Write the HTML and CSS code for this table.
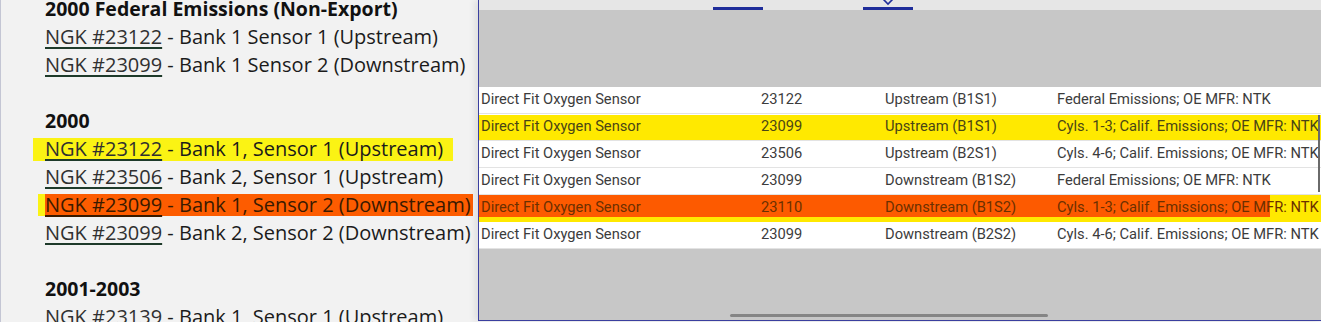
FILE: index.html
```html
<!DOCTYPE html>
<html>
<head>
<meta charset="utf-8">
<link rel="stylesheet" href="styles.css">
</head>
<body>
<div class="left">
  <div class="content">
    <div class="group">
      <div class="line head">2000 Federal Emissions (Non-Export)</div>
      <div class="line"><a href="#">NGK #23122</a> - Bank 1 Sensor 1 (Upstream)</div>
      <div class="line"><a href="#">NGK #23099</a> - Bank 1 Sensor 2 (Downstream)</div>
    </div>
    <div class="group">
      <div class="line head">2000</div>
      <div class="line"><span class="hl-yellow"><a href="#">NGK #23122</a> - Bank 1, Sensor 1 (Upstream)</span></div>
      <div class="line"><a href="#">NGK #23506</a> - Bank 2, Sensor 1 (Upstream)</div>
      <div class="line"><span class="hl-orange"><a href="#">NGK #23099</a> - Bank 1, Sensor 2 (Downstream)</span></div>
      <div class="line"><a href="#">NGK #23099</a> - Bank 2, Sensor 2 (Downstream)</div>
    </div>
    <div class="group">
      <div class="line head">2001-2003</div>
      <div class="line"><a href="#">NGK #23139</a> - Bank 1, Sensor 1 (Upstream)</div>
    </div>
  </div>
</div>
<div class="right">
  <div class="tabs">
    <div class="tab"></div>
    <div class="tab active">
      <svg class="chev" width="12" height="7" viewBox="0 0 12 7"><path d="M1.5 0.5 L6 5 L10.5 0.5" fill="none" stroke="#1f2d9a" stroke-width="1.6"/></svg>
    </div>
  </div>
  <div class="grey-top"></div>
  <div class="table">
    <div class="row"><span>Direct Fit Oxygen Sensor</span><span>23122</span><span>Upstream (B1S1)</span><span>Federal Emissions; OE MFR: NTK</span></div>
    <div class="row yellow"><span>Direct Fit Oxygen Sensor</span><span>23099</span><span>Upstream (B1S1)</span><span>Cyls. 1-3; Calif. Emissions; OE MFR: NTK</span></div>
    <div class="row"><span>Direct Fit Oxygen Sensor</span><span>23506</span><span>Upstream (B2S1)</span><span>Cyls. 4-6; Calif. Emissions; OE MFR: NTK</span></div>
    <div class="row"><span>Direct Fit Oxygen Sensor</span><span>23099</span><span>Downstream (B1S2)</span><span>Federal Emissions; OE MFR: NTK</span></div>
    <div class="row orange"><span>Direct Fit Oxygen Sensor</span><span>23110</span><span>Downstream (B1S2)</span><span>Cyls. 1-3; Calif. Emissions; OE MFR: NTK</span></div>
    <div class="row"><span>Direct Fit Oxygen Sensor</span><span>23099</span><span>Downstream (B2S2)</span><span>Cyls. 4-6; Calif. Emissions; OE MFR: NTK</span></div>
    <div class="vscroll"></div>
  </div>
  <div class="grey-bottom">
    <div class="hthumb"></div>
  </div>
</div>
</body>
</html>
```

FILE: styles.css
```css
html, body {
  margin: 0;
  padding: 0;
}
body {
  width: 1321px;
  height: 322px;
  display: flex;
  overflow: hidden;
  background: #f2f2f2;
}
.left {
  width: 477px;
  flex: none;
  border-left: 1px solid #c4c6d4;
  background: #f2f2f2;
  overflow: hidden;
  font-family: "Open Sans", "Liberation Sans", sans-serif;
  font-size: 20px;
  line-height: 28px;
  color: #1b1b1b;
  white-space: nowrap;
}
.content {
  margin-top: -5px;
  padding-left: 44px;
}
.group + .group {
  margin-top: 28px;
}
.head {
  font-weight: 700;
  font-size: 19.5px;
  color: #111;
}
.line a {
  color: #303030;
  text-decoration: underline;
  text-decoration-color: #1e3a2a;
  text-decoration-thickness: 2px;
  text-underline-offset: 3px;
}
.hl-yellow {
  display: inline-block;
  margin-left: -12px;
  padding: 0 10px 0 12px;
  background: linear-gradient(#fbf314, #fbf314) 0 3px / 100% 23px no-repeat;
}
.hl-orange {
  display: inline-block;
  margin-left: -7px;
  padding: 0 2px 0 7px;
  background:
    linear-gradient(#fd5c00, #fd5c00) 7px 3px / calc(100% - 7px) 22px no-repeat,
    linear-gradient(#fbf314, #fbf314) 0 3px / 7px 22px no-repeat;
}
.hl-orange, .hl-orange a {
  color: #3a1a00;
}
.hl-orange a {
  text-decoration-color: #3a1a00;
}
.right {
  flex: 1;
  height: 320px;
  border-left: 1px solid #3a3f9f;
  border-bottom: 1px solid #3a3f9f;
  display: flex;
  flex-direction: column;
  box-shadow: -4px 0 6px rgba(0, 0, 0, 0.07);
  font-family: Roboto, "Liberation Sans", sans-serif;
  font-size: 14.7px;
  color: #3c3c3c;
}
.tabs {
  height: 10px;
  flex: none;
  background: #e6e6e6;
  display: flex;
  align-items: flex-end;
  gap: 100px;
  padding-left: 234px;
}
.tab {
  width: 50px;
  height: 3px;
  background: #1f2d9a;
  position: relative;
}
.chev {
  position: absolute;
  left: 19px;
  top: -8px;
}
.grey-top {
  height: 77px;
  flex: none;
  background: #c7c7c7;
}
.table {
  flex: none;
  background: #fff;
  position: relative;
}
.row {
  height: 24px;
  padding-bottom: 2px;
  border-bottom: 1px solid #e3e3e3;
  display: grid;
  grid-template-columns: 280px 124px 172px 1fr;
  align-items: center;
  padding-left: 2px;
  white-space: nowrap;
  overflow: hidden;
}
.row.yellow {
  background: linear-gradient(#ffe900, #ffe900) 0 1px / 100% 25px no-repeat, #fff;
  color: #4a4516;
}
.row.orange {
  background: linear-gradient(#fd5a00, #fd5a00) 0 0 / 791px 22px no-repeat, #ffe900;
  color: #6b3000;
  border-bottom-color: #ffe900;
}
.vscroll {
  position: absolute;
  right: 1px;
  top: 28px;
  width: 2px;
  height: 77px;
  background: #6a6a6a;
}
.grey-bottom {
  flex: 1;
  background: #c7c7c7;
  display: flex;
  align-items: flex-end;
  padding-left: 251px;
  padding-bottom: 3px;
}
.hthumb {
  width: 318px;
  height: 3px;
  border-radius: 2px;
  background: #858585;
}
```
